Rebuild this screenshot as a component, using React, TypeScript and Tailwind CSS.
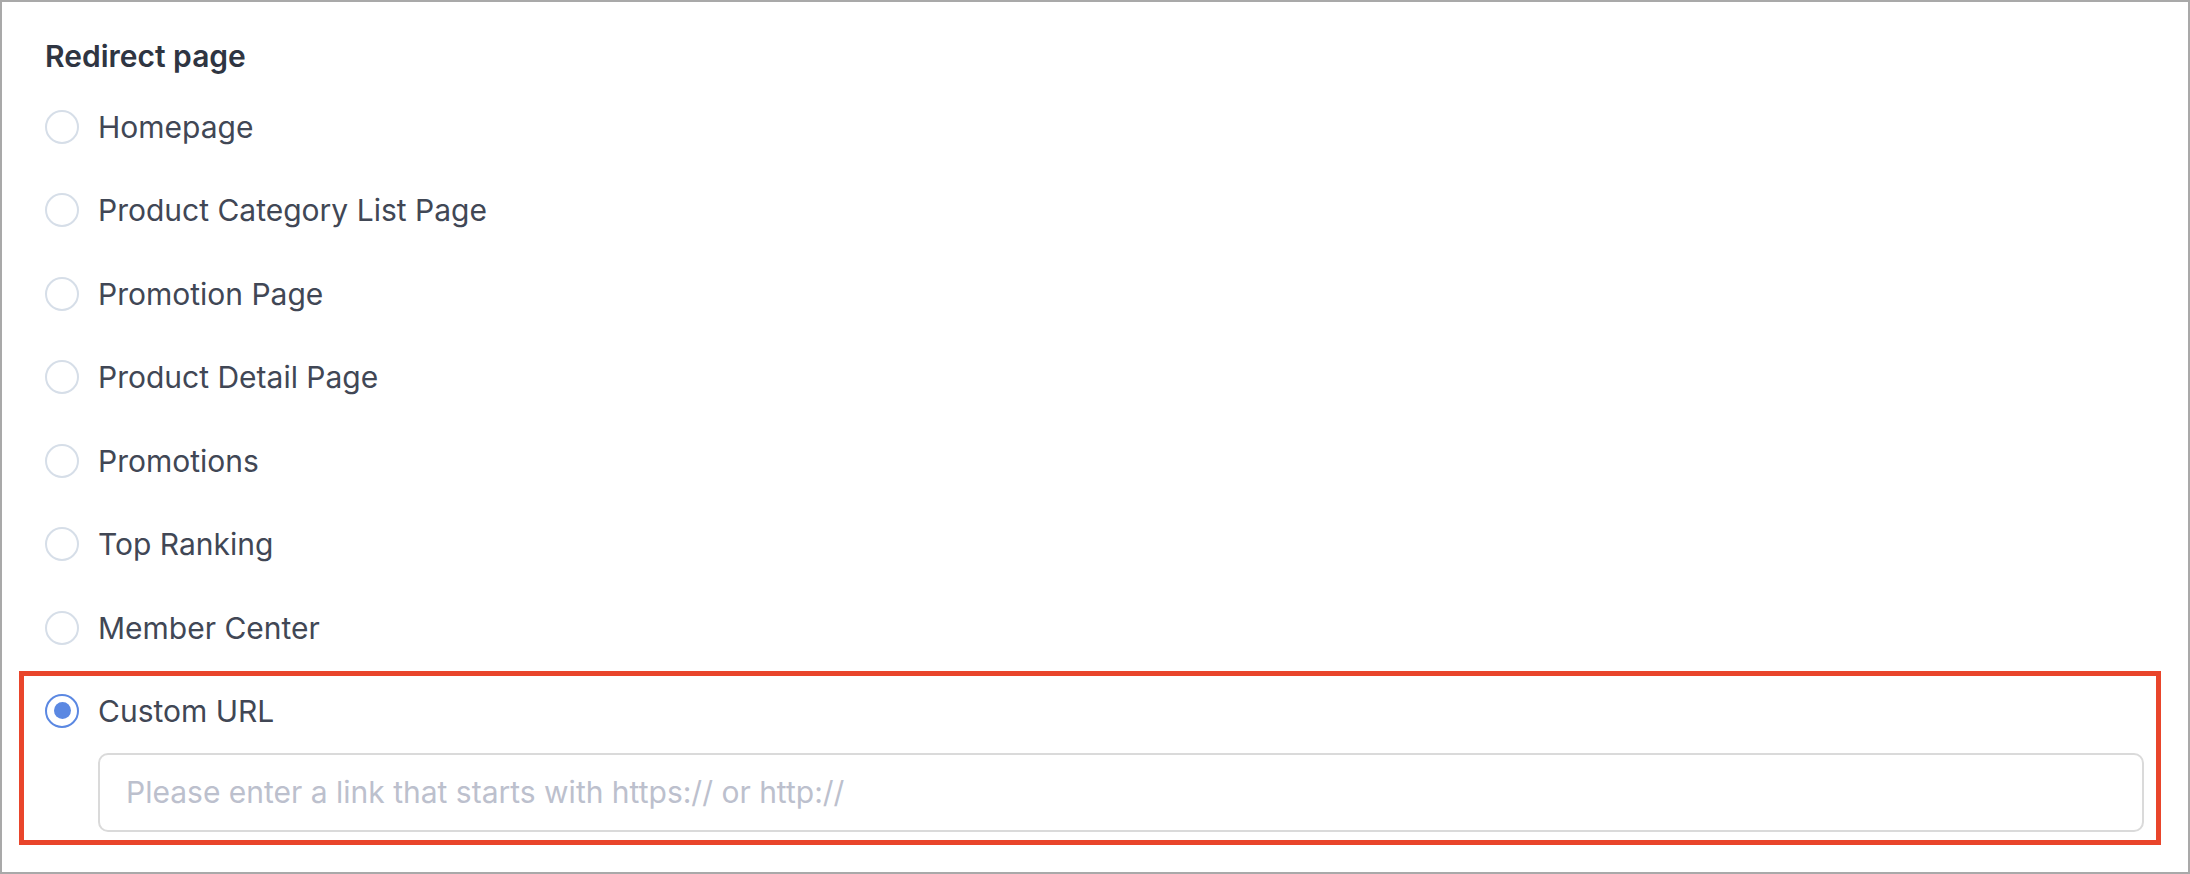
import { useState } from "react";

const OPTIONS = [
  "Homepage",
  "Product Category List Page",
  "Promotion Page",
  "Product Detail Page",
  "Promotions",
  "Top Ranking",
  "Member Center",
];

function Radio({ checked }: { checked: boolean }) {
  return (
    <span
      className={`flex h-[34px] w-[34px] shrink-0 items-center justify-center rounded-full border-2 bg-white ${
        checked ? "border-[#5b88e2]" : "border-[#d6dee8]"
      }`}
    >
      {checked && <span className="h-[17px] w-[17px] rounded-full bg-[#5b88e2]" />}
    </span>
  );
}

export default function App() {
  const [selected, setSelected] = useState("Custom URL");
  const [url, setUrl] = useState("");

  return (
    <div
      className="h-[874px] w-[2190px] overflow-hidden border-2 border-[#a9a9a9] bg-white pl-[43px] pr-[44px] pt-[33px] text-[#414755]"
      style={{ fontFamily: "Inter, 'Noto Sans', sans-serif" }}
    >
      <div className="text-[30px] font-semibold leading-[42px] text-[#2f3542]">
        Redirect page
      </div>

      <div className="mt-[8px] flex flex-col">
        {OPTIONS.map((opt) => (
          <label
            key={opt}
            className="flex h-[83.5px] cursor-pointer items-center gap-[19px]"
            onClick={() => setSelected(opt)}
          >
            <Radio checked={selected === opt} />
            <span className="text-[30px] leading-none">{opt}</span>
          </label>
        ))}

        {/* Custom URL (highlighted) */}
        <div className="-ml-[26px] -mr-[17px] mt-[1px] border-[5px] border-[#e9452b] pb-[8px] pl-[21px] pr-[12px]">
          <label
            className="flex h-[70px] cursor-pointer items-center gap-[19px]"
            onClick={() => setSelected("Custom URL")}
          >
            <Radio checked={selected === "Custom URL"} />
            <span className="text-[30px] leading-none">Custom URL</span>
          </label>
          <div className="ml-[53px] mt-[7px]">
            <input
              value={url}
              onChange={(e) => setUrl(e.target.value)}
              placeholder="Please enter a link that starts with https:// or http://"
              className="h-[79px] w-full rounded-[10px] border-2 border-[#dadada] bg-white px-[26px] text-[30px] text-[#414755] outline-none placeholder:text-[#bcc0cd]"
            />
          </div>
        </div>
      </div>
    </div>
  );
}
